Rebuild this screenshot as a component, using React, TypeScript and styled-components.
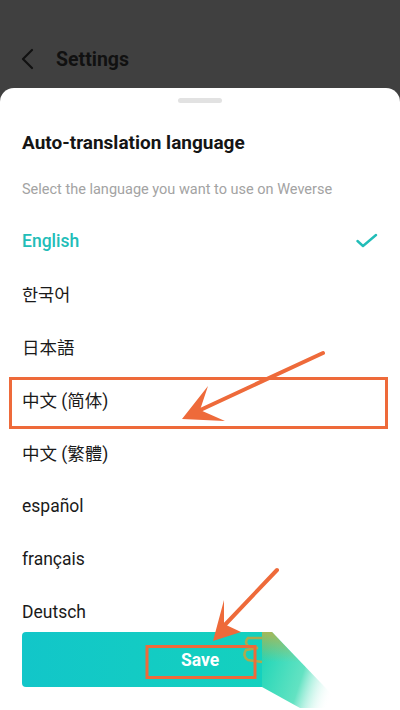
import React from "react";
import styled, { createGlobalStyle } from "styled-components";

const languages = [
  "English",
  "한국어",
  "日本語",
  "中文 (简体)",
  "中文 (繁體)",
  "español",
  "français",
  "Deutsch",
];

export default function App() {
  return (
    <>
      <GlobalStyle />
      <Page>
        <Header>
          <BackIcon viewBox="0 0 14 22">
            <polyline points="12,2 3,11 12,20" />
          </BackIcon>
          <HeaderTitle>Settings</HeaderTitle>
        </Header>
        <Sheet>
          <Handle />
          <Title>Auto-translation language</Title>
          <Subtitle>Select the language you want to use on Weverse</Subtitle>
          <List>
            {languages.map((name, i) => (
              <Row key={name} $selected={i === 0}>
                <span>{name}</span>
                {i === 0 && (
                  <CheckIcon viewBox="0 0 22 16">
                    <polyline points="1.5,8 7,13 20,2" />
                  </CheckIcon>
                )}
              </Row>
            ))}
          </List>
          <Footer>
            <SaveButton>Save</SaveButton>
          </Footer>
        </Sheet>
        <Annotations viewBox="0 0 400 710">
          <defs>
            <linearGradient id="smear" x1="0" y1="0" x2="1" y2="0.3">
              <stop offset="0" stopColor="#16d4b8" stopOpacity="1" />
              <stop offset="0.6" stopColor="#20d6a8" stopOpacity="0.7" />
              <stop offset="1" stopColor="#ffffff" stopOpacity="0" />
            </linearGradient>
            <linearGradient id="smearTop" x1="0" y1="0" x2="0" y2="1">
              <stop offset="0" stopColor="#c8b040" stopOpacity="0.8" />
              <stop offset="1" stopColor="#c8b040" stopOpacity="0" />
            </linearGradient>
          </defs>
          <rect x="262" y="628" width="120" height="64" fill="#ffffff" />
          <polygon
            points="262,632 272,632 345,708 300,708 262,687"
            fill="url(#smear)"
          />
          <polygon points="262,632 272,632 300,662 262,662" fill="url(#smearTop)" />
          <path
            d="M262 638 L248 638 Q244 642 248 646 L258 648 L246 650 Q242 656 248 660 L262 662"
            fill="none"
            stroke="#c9a23a"
            strokeWidth="2.5"
            opacity="0.85"
          />
          <rect
            x="10.5"
            y="378.5"
            width="376"
            height="49"
            fill="none"
            stroke="#ee6a3a"
            strokeWidth="3"
          />
          <line
            x1="323"
            y1="353"
            x2="196"
            y2="412"
            stroke="#ee6a3a"
            strokeWidth="4"
            strokeLinecap="round"
          />
          <polygon points="182,419 208,386 200,410 225,421" fill="#ee6a3a" />
          <rect
            x="147"
            y="646.5"
            width="108"
            height="31"
            fill="none"
            stroke="#ee6a3a"
            strokeWidth="3"
          />
          <line
            x1="277"
            y1="570"
            x2="220"
            y2="630"
            stroke="#ee6a3a"
            strokeWidth="4"
            strokeLinecap="round"
          />
          <polygon points="213,641 224,600 224,624 241,632" fill="#ee6a3a" />
        </Annotations>
      </Page>
    </>
  );
}

const GlobalStyle = createGlobalStyle`
  body {
    margin: 0;
    background: #404040;
    font-family: Roboto, "Noto Sans CJK SC", "Noto Sans CJK KR", "Noto Sans CJK JP", sans-serif;
  }
`;

const Page = styled.div`
  position: relative;
  width: 400px;
  height: 710px;
  display: flex;
  flex-direction: column;
  overflow: hidden;
  background: #404040;
`;

const Header = styled.div`
  height: 58px;
  padding-top: 30px;
  display: flex;
  align-items: center;
  gap: 22px;
  padding-left: 20px;
`;

const BackIcon = styled.svg`
  width: 14px;
  height: 22px;
  fill: none;
  stroke: #111;
  stroke-width: 2.2;
  stroke-linecap: round;
  stroke-linejoin: round;
`;

const HeaderTitle = styled.div`
  font-size: 19.5px;
  font-weight: 700;
  color: #111;
`;

const Sheet = styled.div`
  flex: 1;
  min-height: 0;
  display: flex;
  flex-direction: column;
  background: #fff;
  border-radius: 14px 14px 0 0;
  padding: 0 22px;
`;

const Handle = styled.div`
  align-self: center;
  width: 44px;
  height: 5px;
  margin-top: 10px;
  border-radius: 3px;
  background: #e2e2e2;
`;

const Title = styled.div`
  margin-top: 28px;
  font-size: 19px;
  line-height: 24px;
  font-weight: 700;
  color: #151515;
`;

const Subtitle = styled.div`
  margin-top: 25px;
  font-size: 14.5px;
  line-height: 20px;
  color: #a3a3a3;
`;

const List = styled.div`
  flex: 1;
  min-height: 0;
  margin-top: 14px;
  overflow: hidden;
`;

const Row = styled.div<{ $selected: boolean }>`
  height: 53px;
  display: flex;
  align-items: center;
  justify-content: space-between;
  font-size: 17.5px;
  font-weight: ${(p) => (p.$selected ? 500 : 400)};
  color: ${(p) => (p.$selected ? "#22bdb8" : "#1a1a1a")};
`;

const CheckIcon = styled.svg`
  width: 22px;
  height: 16px;
  fill: none;
  stroke: #22bdb8;
  stroke-width: 2.4;
  stroke-linecap: round;
  stroke-linejoin: round;
`;

const Footer = styled.div`
  padding: 2px 0 23px;
`;

const SaveButton = styled.div`
  height: 55px;
  display: flex;
  align-items: center;
  justify-content: center;
  border-radius: 4px;
  background: linear-gradient(90deg, #12c6c9 0%, #15d6b9 100%);
  color: #fff;
  font-size: 17.5px;
  font-weight: 700;
`;

const Annotations = styled.svg`
  position: absolute;
  top: 0;
  left: 0;
  width: 400px;
  height: 710px;
  pointer-events: none;
`;
